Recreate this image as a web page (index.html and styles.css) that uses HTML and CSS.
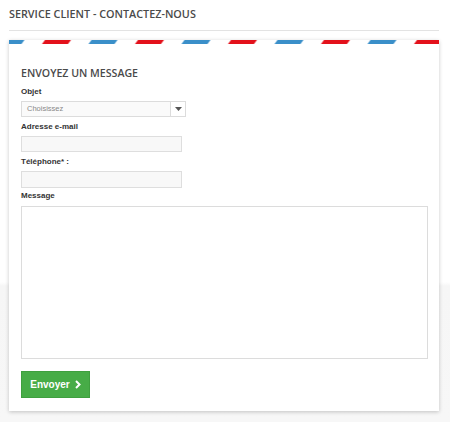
FILE: index.html
```html
<!DOCTYPE html>
<html lang="fr">
<head>
<meta charset="utf-8">
<title>Service client - Contactez-nous</title>
<link rel="stylesheet" href="styles.css">
</head>
<body>
<div class="page">
  <h1 class="title">SERVICE CLIENT - CONTACTEZ-NOUS</h1>
  <div class="card">
    <svg class="stripe" width="430" height="4" viewBox="0 0 430 4" aria-hidden="true">
      <defs>
        <pattern id="air" patternUnits="userSpaceOnUse" x="-13.5" y="0" width="93" height="4">
          <polygon points="3,0 29,0 26,4 0,4" fill="#3a8fc9"/>
          <polygon points="49.5,0 75.5,0 72.5,4 46.5,4" fill="#e3111b"/>
        </pattern>
      </defs>
      <rect width="430" height="4" fill="url(#air)"/>
    </svg>
    <form class="card-body">
      <h2 class="heading">ENVOYEZ UN MESSAGE</h2>
      <label class="label">Objet</label>
      <div class="select">
        <span class="select-text">Choisissez</span>
        <span class="select-arrow"><svg width="7" height="4" viewBox="0 0 7 4"><polygon points="0,0 7,0 3.5,4" fill="#555"/></svg></span>
      </div>
      <label class="label">Adresse e-mail</label>
      <input class="input" type="text">
      <label class="label">Téléphone* :</label>
      <input class="input input-tall" type="text">
      <label class="label label-tight">Message</label>
      <textarea class="textarea"></textarea>
      <button class="btn" type="button">Envoyer <svg class="chev" width="6" height="9" viewBox="0 0 6 9"><polyline points="1,1 4.5,4.5 1,8" fill="none" stroke="#fff" stroke-width="2"/></svg></button>
    </form>
  </div>
</div>
</body>
</html>
```
FILE: styles.css
```css
* { box-sizing: border-box; }
html, body { margin: 0; padding: 0; }
body {
  width: 450px;
  height: 422px;
  overflow: hidden;
  background: linear-gradient(#fff 0, #fff 282px, #f6f6f6 286px, #f7f7f7 100%);
  font-family: "Liberation Sans", Arial, sans-serif;
}
.page {
  padding: 0 11px 0 9px;
}
.title {
  margin: 0;
  padding-top: 7px;
  height: 31px;
  border-bottom: 1px solid #e3e3e3;
  font-family: "Open Sans", sans-serif;
  font-weight: 600;
  font-size: 10.8px;
  line-height: 14px;
  color: #4a4a4a;
}
.card {
  margin-top: 9px;
  width: 430px;
  height: 371px;
  background: #fff;
  box-shadow: 0 1px 4px rgba(0,0,0,0.22);
}
.stripe { display: block; }
.card-body {
  display: flex;
  flex-direction: column;
  align-items: flex-start;
  padding: 0 11px 0 12px;
  margin: 0;
}
.heading {
  margin: 22px 0 0;
  font-family: "Open Sans", sans-serif;
  font-weight: 600;
  font-size: 10.6px;
  line-height: 14px;
  color: #4a4a4a;
}
.label {
  display: block;
  font-size: 8px;
  font-weight: bold;
  color: #333;
  line-height: 10px;
  margin-top: 5px;
  margin-bottom: 4px;
}
.heading + .label { margin-top: 7px; }
.label-tight { margin-top: 3px; margin-bottom: 5px; }
.select {
  display: flex;
  width: 165px;
  height: 16px;
  border: 1px solid #dcdcdc;
  background: #fafafa;
}
.select-text {
  flex: 1;
  font-size: 7.5px;
  color: #888;
  line-height: 14px;
  padding-left: 5px;
}
.select-arrow {
  width: 15px;
  border-left: 1px solid #dcdcdc;
  background: #fff;
  display: flex;
  align-items: center;
  justify-content: center;
}
.input {
  display: block;
  width: 161px;
  height: 16px;
  margin: 0;
  border: 1px solid #dedede;
  background: #f8f8f8;
  padding: 0;
}
.input-tall { height: 17px; }
.textarea {
  display: block;
  width: 407px;
  height: 153px;
  margin: 0;
  border: 1px solid #dcdcdc;
  background: #fff;
  padding: 0;
  resize: none;
}
.btn {
  margin-top: 12px;
  width: 69px;
  height: 27px;
  border: 1px solid #3f9f3f;
  background: #47ac47;
  color: #fff;
  font-family: "Liberation Sans", Arial, sans-serif;
  font-weight: bold;
  font-size: 10px;
  display: flex;
  align-items: center;
  justify-content: center;
  gap: 5px;
  padding: 0;
}
.chev { display: block; }
```
